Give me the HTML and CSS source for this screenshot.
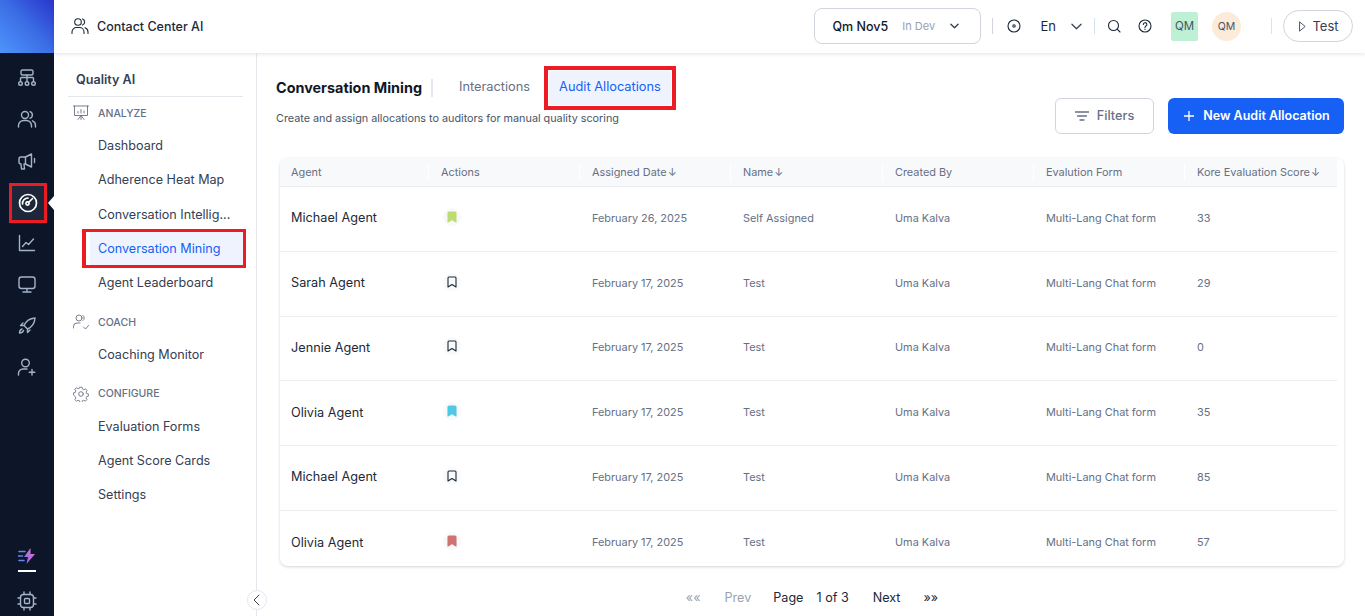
FILE: index.html
```html
<!DOCTYPE html>
<html lang="en">
<head>
    <meta charset="UTF-8">
    <title>Conversation Mining</title>
    <link rel="stylesheet" href="styles.css">
</head>
<body>
<div class="app">
    <nav class="rail">
        <div class="rail-logo">
            <svg width="22" height="22" viewBox="0 0 22 22" fill="#fff"><circle cx="3" cy="3" r="2.3"/><circle cx="11" cy="3" r="2.3"/><circle cx="19" cy="3" r="2.3"/><circle cx="3" cy="11" r="2.3"/><circle cx="11" cy="11" r="2.3"/><circle cx="19" cy="11" r="2.3"/><circle cx="3" cy="19" r="2.3"/><circle cx="11" cy="19" r="2.3"/><circle cx="19" cy="19" r="2.3"/></svg>
        </div>
        <ul class="rail-list">
            <li class="rail-item"><svg class="rail-icon" viewBox="0 0 20 20"><rect x="4" y="2" width="12" height="5" rx="1.5"/><path d="M10 7v6M3.500 13v-2.500a1 1 0 0 1 1-1h11a1 1 0 0 1 1 1V13"/><circle cx="3.500" cy="15.500" r="1.800"/><circle cx="10" cy="15.500" r="1.800"/><circle cx="16.500" cy="15.500" r="1.800"/></svg></li>
            <li class="rail-item"><svg class="rail-icon" viewBox="0 0 20 20"><circle cx="8" cy="6" r="3.500"/><path d="M1.500 18v-1.500a5 5 0 0 1 5-5h3a5 5 0 0 1 5 5V18M13 2.700a3.500 3.500 0 0 1 0 6.600M15.500 11.800a5 5 0 0 1 3 4.700V18"/></svg></li>
            <li class="rail-item"><svg class="rail-icon" viewBox="0 0 20 20"><path d="M2 8a2 2 0 0 1 2-2h4.500L14.500 3v13l-6-3H7l.5 5h-3L4 13a2 2 0 0 1-2-2zM8.500 6v7M17.500 7.500v4"/></svg></li>
            <li class="rail-item rail-item-active mark">
                <svg class="rail-icon rail-icon-white" viewBox="0 0 20 20"><circle cx="10" cy="10" r="8.500"/><path d="M10.500 9.500 14.500 5.500"/><circle cx="9.500" cy="10.500" r="1.600"/><path d="M4.500 11a5.500 5.500 0 0 1 5.500-6"/></svg>
            </li>
            <li class="rail-item"><svg class="rail-icon" viewBox="0 0 20 20"><path d="M2.500 2.500V17.500H17.500M5.500 13.500l3.500-4 2.500 2 5-5.500"/></svg></li>
            <li class="rail-item"><svg class="rail-icon" viewBox="0 0 20 20"><rect x="2" y="3" width="16" height="11.500" rx="2.500"/><path d="M10 14.500V18M6 18h8"/></svg></li>
            <li class="rail-item"><svg class="rail-icon" viewBox="0 0 20 20"><path d="M7 9.500C9 5 12.500 2.500 18 2c-.3 5.500-3 9-7.500 11zM7 9.500H3.500L6 7M10.500 13v3.500L13 14M7 9.500l3.500 3.500M5 13c-1.500.5-2.500 2-2.500 4 2 0 3.500-1 4-2.500"/></svg></li>
            <li class="rail-item"><svg class="rail-icon" viewBox="0 0 20 20"><circle cx="8.500" cy="6" r="3.800"/><path d="M1.500 18v-1.500a4.500 4.500 0 0 1 4.500-4.500h4M15 12.500v5.500M12.200 15.200h5.600"/></svg></li>
        </ul>
        <div class="rail-bottom">
            <div class="rail-bolt">
                <svg width="18" height="16" viewBox="0 0 18 16">
                    <defs><linearGradient id="bolt" x1="0" y1="1" x2="1" y2="0"><stop offset="0" stop-color="#7b6cf0"/><stop offset="1" stop-color="#ef74c6"/></linearGradient></defs>
                    <path d="M12.500 0 6 9h4L8.500 16 17 6h-4.500z" fill="url(#bolt)"/>
                    <path d="M1 3.500h6M0 8h4.500M1 12.500h5" stroke="#6488f0" stroke-width="1.500" fill="none"/>
                </svg>
            </div>
            <div class="rail-chip">
                <svg class="rail-icon" viewBox="0 0 20 20"><rect x="3.500" y="3.500" width="13" height="13" rx="3"/><rect x="7.500" y="7.500" width="5" height="5" rx="1"/><path d="M7 1v2.500M13 1v2.500M7 16.500V19M13 16.500V19M1 7h2.500M1 13h2.500M16.500 7H19M16.500 13H19"/></svg>
            </div>
        </div>
    </nav>

    <div class="main">
        <header class="topbar">
            <div class="product">
                <svg class="top-icon product-icon" viewBox="0 0 18 18"><circle cx="7" cy="5" r="3.300"/><path d="M1 16.500V15a4.500 4.500 0 0 1 4.500-4.500h3A4.500 4.500 0 0 1 13 15v1.500M11.500 1.900a3.300 3.300 0 0 1 0 6.200M14 10.700a4.500 4.500 0 0 1 3 4.300v1.500"/></svg>
                <span>Contact Center AI</span>
            </div>
            <div class="top-right">
                <div class="env">
                    <span class="env-name">Qm Nov5</span>
                    <span class="env-state">In Dev</span>
                    <svg class="chev env-chev" viewBox="0 0 10 6"><path d="M1 1l4 4 4-4"/></svg>
                </div>
                <i class="top-sep sep-a"></i>
                <svg class="top-icon icon-disc" viewBox="0 0 14 14"><circle cx="7" cy="7" r="6"/><circle cx="7" cy="7" r="1.200"/></svg>
                <span class="lang">En</span>
                <svg class="chev lang-chev" viewBox="0 0 12 7"><path d="M1 1l5 5 5-5"/></svg>
                <i class="top-sep sep-b"></i>
                <svg class="top-icon icon-search" viewBox="0 0 14 14"><circle cx="6.500" cy="6.500" r="5"/><path d="M10.200 10.200 13 13"/></svg>
                <svg class="top-icon icon-help" viewBox="0 0 14 14"><circle cx="7" cy="7" r="6"/><path d="M5.300 5.500a1.800 1.800 0 1 1 2.600 1.600c-.6.300-.9.600-.9 1.300M7 10v.5"/></svg>
                <span class="badge-square">QM</span>
                <span class="badge-round">QM</span>
                <i class="top-sep sep-c"></i>
                <div class="test-btn">
                    <svg class="play" viewBox="0 0 8 12"><path d="M1 1l6 5-6 5z"/></svg>
                    <span>Test</span>
                </div>
            </div>
        </header>

        <div class="body">
            <aside class="side">
                <div class="side-title">Quality AI</div>
                <div class="side-group side-group-first">
                    <svg class="group-icon" viewBox="0 0 16 16"><path d="M0.500 1h15M1.500 1v9.500h13V1M5 14.500l3-4 3 4M8 10.500v4M5 8V6.500M8 8V4.500M11 8V6"/></svg>
                    <span>ANALYZE</span>
                </div>
                <a class="side-link">Dashboard</a>
                <a class="side-link">Adherence Heat Map</a>
                <a class="side-link">Conversation Intellig...</a>
                <a class="side-link side-link-active">Conversation Mining</a>
                <a class="side-link">Agent Leaderboard</a>
                <div class="side-group side-group-coach">
                    <svg class="group-icon" viewBox="0 0 16 16"><circle cx="6" cy="4" r="3"/><path d="M0.500 14v-1.500a3.500 3.500 0 0 1 3.500-3.500h3M10 1.500a3 3 0 0 1 0 5M10.500 13l2 2 3-3.500"/></svg>
                    <span>COACH</span>
                </div>
                <a class="side-link">Coaching Monitor</a>
                <div class="side-group side-group-config">
                    <svg class="group-icon" viewBox="0 0 16 16"><circle cx="8" cy="8" r="2.300"/><path d="M6.800 1h2.400l.4 2 1.500.7 1.800-1 1.600 1.800-1.100 1.700.6 1.600 1.900.4v2.400l-1.900.5-.6 1.500 1 1.700-1.700 1.700-1.700-1-1.600.6-.4 1.900H6.800l-.4-1.900-1.600-.6-1.700 1-1.700-1.700 1-1.700-.6-1.500L-.1 9.400V7l1.900-.4.600-1.600L1.300 3.300 2.900 1.500l1.800 1 1.700-.7z" transform="translate(.6 .3) scale(.93)"/></svg>
                    <span>CONFIGURE</span>
                </div>
                <a class="side-link">Evaluation Forms</a>
                <a class="side-link">Agent Score Cards</a>
                <a class="side-link">Settings</a>
                <button class="collapse"><svg viewBox="0 0 7 12"><path d="M6 1 1 6l5 5"/></svg></button>
            </aside>

            <section class="content">
                <div class="page-head">
                    <div class="page-head-left">
                        <div class="tabs">
                            <h1 class="page-title">Conversation Mining</h1>
                            <span class="tab">Interactions</span>
                            <span class="tab tab-active mark">Audit Allocations</span>
                        </div>
                        <p class="page-sub">Create and assign allocations to auditors for manual quality scoring</p>
                    </div>
                    <div class="page-actions">
                        <button class="btn btn-filter">
                            <svg viewBox="0 0 14 10"><path d="M0 1h14M2.500 5h9M5 9h4"/></svg>Filters
                        </button>
                        <button class="btn btn-new">
                            <svg viewBox="0 0 10 10"><path d="M5 0v10M0 5h10"/></svg>New Audit Allocation
                        </button>
                    </div>
                </div>

                <div class="card">
                    <div class="row row-head">
                        <div class="cell">Agent</div>
                        <div class="cell">Actions</div>
                        <div class="cell">Assigned Date<span class="arrow">↓</span></div>
                        <div class="cell">Name<span class="arrow">↓</span></div>
                        <div class="cell">Created By</div>
                        <div class="cell">Evalution Form</div>
                        <div class="cell">Kore Evaluation Score<span class="arrow">↓</span></div>
                    </div>
                    <div class="row">
                        <div class="cell cell-agent">Michael Agent</div>
                        <div class="cell"><span class="flag flag-green"><svg viewBox="0 0 10 12"><path d="M1 2a1 1 0 0 1 1-1h6a1 1 0 0 1 1 1v9L5 8.500 1 11z"/></svg></span></div>
                        <div class="cell">February 26, 2025</div>
                        <div class="cell">Self Assigned</div>
                        <div class="cell">Uma Kalva</div>
                        <div class="cell">Multi-Lang Chat form</div>
                        <div class="cell">33</div>
                    </div>
                    <div class="row">
                        <div class="cell cell-agent">Sarah Agent</div>
                        <div class="cell"><span class="flag"><svg viewBox="0 0 10 12"><path d="M1 2a1 1 0 0 1 1-1h6a1 1 0 0 1 1 1v9L5 8.500 1 11z"/></svg></span></div>
                        <div class="cell">February 17, 2025</div>
                        <div class="cell">Test</div>
                        <div class="cell">Uma Kalva</div>
                        <div class="cell">Multi-Lang Chat form</div>
                        <div class="cell">29</div>
                    </div>
                    <div class="row">
                        <div class="cell cell-agent">Jennie Agent</div>
                        <div class="cell"><span class="flag"><svg viewBox="0 0 10 12"><path d="M1 2a1 1 0 0 1 1-1h6a1 1 0 0 1 1 1v9L5 8.500 1 11z"/></svg></span></div>
                        <div class="cell">February 17, 2025</div>
                        <div class="cell">Test</div>
                        <div class="cell">Uma Kalva</div>
                        <div class="cell">Multi-Lang Chat form</div>
                        <div class="cell">0</div>
                    </div>
                    <div class="row">
                        <div class="cell cell-agent">Olivia Agent</div>
                        <div class="cell"><span class="flag flag-blue"><svg viewBox="0 0 10 12"><path d="M1 2a1 1 0 0 1 1-1h6a1 1 0 0 1 1 1v9L5 8.500 1 11z"/></svg></span></div>
                        <div class="cell">February 17, 2025</div>
                        <div class="cell">Test</div>
                        <div class="cell">Uma Kalva</div>
                        <div class="cell">Multi-Lang Chat form</div>
                        <div class="cell">35</div>
                    </div>
                    <div class="row">
                        <div class="cell cell-agent">Michael Agent</div>
                        <div class="cell"><span class="flag"><svg viewBox="0 0 10 12"><path d="M1 2a1 1 0 0 1 1-1h6a1 1 0 0 1 1 1v9L5 8.500 1 11z"/></svg></span></div>
                        <div class="cell">February 17, 2025</div>
                        <div class="cell">Test</div>
                        <div class="cell">Uma Kalva</div>
                        <div class="cell">Multi-Lang Chat form</div>
                        <div class="cell">85</div>
                    </div>
                    <div class="row row-last">
                        <div class="cell cell-agent">Olivia Agent</div>
                        <div class="cell"><span class="flag flag-red"><svg viewBox="0 0 10 12"><path d="M1 2a1 1 0 0 1 1-1h6a1 1 0 0 1 1 1v9L5 8.500 1 11z"/></svg></span></div>
                        <div class="cell">February 17, 2025</div>
                        <div class="cell">Test</div>
                        <div class="cell">Uma Kalva</div>
                        <div class="cell">Multi-Lang Chat form</div>
                        <div class="cell">57</div>
                    </div>
                </div>

                <div class="pager">
                    <span class="pg pg-off pg-first">««</span>
                    <span class="pg pg-off pg-prev">Prev</span>
                    <span class="pg pg-page">Page</span>
                    <span class="pg pg-count">1 of 3</span>
                    <span class="pg pg-next">Next</span>
                    <span class="pg pg-last">»»</span>
                </div>
            </section>
        </div>
    </div>
</div>
</body>
</html>
```

FILE: styles.css
```css
* {
    box-sizing: border-box;
}
html, body {
    margin: 0;
    height: 100%;
    overflow: hidden;
}
body {
    font-family: "Inter", "Liberation Sans", sans-serif;
    color: #101828;
    background: #fff;
}
svg {
    display: block;
    fill: none;
    stroke-linecap: round;
    stroke-linejoin: round;
}

/* red annotation boxes from the screenshot */
.mark {
    outline: 3px solid #ed1c24;
}

.app {
    display: flex;
    height: 616px;
}

/* left rail */
.rail {
    width: 54px;
    flex: none;
    background: #0d1629;
    display: flex;
    flex-direction: column;
}
.rail-logo {
    height: 53px;
    padding-bottom: 1px;
    display: flex;
    align-items: center;
    justify-content: center;
    background: linear-gradient(45deg, #4f93fb 0%, #3b6fe6 50%, #2a35cc 100%);
}
.rail-list {
    list-style: none;
    margin: 4.350px 0 0;
    padding: 0;
}
.rail-item {
    height: 41.300px;
    display: flex;
    align-items: center;
    justify-content: center;
    position: relative;
}
.rail-icon {
    width: 20px;
    height: 20px;
    stroke: #a3b3c9;
    stroke-width: 1.400;
}
.rail-icon-white {
    stroke: #fff;
    stroke-width: 1.700;
}
.rail-item-active {
    width: 32px;
    height: 34px;
    margin: 4.750px 0 2.550px 12px;
    background: #1d2739;
}
.rail-item-active:after {
    content: "";
    position: absolute;
    right: -10px;
    top: 10px;
    border-style: solid;
    border-color: transparent #fff transparent transparent;
    border-width: 7px 6px 7px 0;
}
.rail-bottom {
    margin-top: auto;
}
.rail-bolt {
    width: 18px;
    margin: 0 auto;
    padding-bottom: 6px;
    border-bottom: 2px solid #fff;
}
.rail-chip {
    height: 30px;
    margin-top: 14px;
    display: flex;
    align-items: center;
    justify-content: center;
}

.main {
    flex: 1;
    min-width: 0;
    display: flex;
    flex-direction: column;
}

/* top bar */
.topbar {
    height: 53px;
    flex: none;
    display: flex;
    align-items: center;
    justify-content: space-between;
    background: #fff;
    box-shadow: 0 1px 4px rgba(16, 24, 40, 0.12);
    position: relative;
    z-index: 2;
    padding: 0 12px 1px 17px;
}
.product {
    display: flex;
    align-items: center;
    font-size: 12.500px;
    font-weight: 500;
    color: #1d2939;
}
.product-icon {
    width: 18px;
    height: 18px;
    margin-right: 8px;
    stroke-width: 1.300;
}
.top-icon {
    stroke: #1d2939;
    stroke-width: 1.100;
    flex: none;
}
.top-right {
    display: flex;
    align-items: center;
}
.env {
    width: 167px;
    height: 36px;
    border: 1px solid #d0d5dd;
    border-radius: 8px;
    display: flex;
    align-items: center;
    padding-left: 18px;
}
.env-name {
    font-size: 12.500px;
    font-weight: 500;
    color: #101828;
}
.env-state {
    font-size: 11px;
    color: #98a2b3;
    margin-left: 14px;
}
.chev {
    stroke: #344054;
    stroke-width: 1.300;
    flex: none;
}
.env-chev {
    width: 9px;
    height: 6px;
    margin-left: 15px;
    stroke-width: 1.500;
}
.top-sep {
    display: block;
    width: 1px;
    height: 16px;
    background: #d0d5dd;
    flex: none;
}
.sep-a {
    margin-left: 11px;
}
.icon-disc {
    width: 14px;
    height: 14px;
    margin-left: 14px;
}
.lang {
    font-size: 13px;
    margin-left: 20px;
    color: #1d2939;
}
.lang-chev {
    width: 11px;
    height: 7px;
    margin-left: 15px;
}
.sep-b {
    margin-left: 12px;
    background: #d5e0f5;
}
.icon-search {
    width: 14px;
    height: 14px;
    margin-left: 12px;
}
.icon-help {
    width: 14px;
    height: 14px;
    margin-left: 17px;
}
.badge-square {
    width: 27px;
    height: 29px;
    margin-left: 19px;
    background: #bdf0d4;
    border-radius: 2px;
    display: flex;
    align-items: center;
    justify-content: center;
    font-size: 11.500px;
    color: #475467;
}
.badge-round {
    width: 29px;
    height: 29px;
    margin-left: 14px;
    border-radius: 50%;
    background: #fdebd9;
    display: flex;
    align-items: center;
    justify-content: center;
    font-size: 10.500px;
    color: #475467;
}
.sep-c {
    margin-left: 30px;
    background: #f2dbe0;
}
.test-btn {
    width: 70px;
    height: 32px;
    margin-left: 11px;
    border: 1px solid #d0d5dd;
    border-radius: 16px;
    display: flex;
    align-items: center;
    justify-content: center;
    font-size: 13px;
    color: #344054;
}
.play {
    width: 7px;
    height: 11px;
    stroke: #344054;
    stroke-width: 1;
    margin: 0 6px 0 2px;
}

.body {
    flex: 1;
    min-height: 0;
    display: flex;
}

/* second level menu */
.side {
    width: 203px;
    flex: none;
    border-right: 1px solid #e4e7ec;
    padding: 19px 13px 0 14px;
    position: relative;
    display: flex;
    flex-direction: column;
}
.side-title {
    font-size: 12.600px;
    font-weight: 600;
    color: #344054;
    padding: 0 0 8px 8px;
    line-height: 16px;
    border-bottom: 1px solid #e4e7ec;
    margin-bottom: 1px;
}
.side-group {
    display: flex;
    flex: none;
    align-items: center;
    height: 16px;
    font-size: 10.500px;
    font-weight: 500;
    color: #667085;
    padding-left: 5px;
    margin-bottom: 7px;
}
.side-group-first {
    margin-top: 7px;
}
.side-group-coach {
    margin-top: 15px;
}
.side-group-config {
    margin-top: 14.500px;
}
.group-icon {
    width: 16px;
    height: 16px;
    stroke: #667085;
    stroke-width: 0.900;
    margin-right: 9px;
    flex: none;
}
.side-link {
    display: block;
    flex: none;
    height: 34.250px;
    line-height: 35px;
    font-size: 12.600px;
    color: #344054;
    padding-left: 30px;
}
.side-link-active {
    height: 39px;
    line-height: 33px;
    margin: -2px -3px -3px 14px;
    padding-left: 4px;
    text-indent: 8px;
    background: #eff3fe;
    background-clip: content-box;
    color: #1660f5;
    border: 3px solid #ed1c24;
    border-left-width: 4px;
    position: relative;
}
.collapse {
    position: absolute;
    right: -10.500px;
    bottom: 6px;
    width: 20px;
    height: 20px;
    padding: 0;
    border-radius: 50%;
    background: #fff;
    border: 1px solid #e4e7ec;
    display: flex;
    align-items: center;
    justify-content: center;
}
.collapse svg {
    width: 7px;
    height: 12px;
    stroke: #344054;
    stroke-width: 1;
}

/* content */
.content {
    flex: 1;
    min-width: 0;
    padding: 17px 21px 0 19px;
    display: flex;
    flex-direction: column;
}
.page-head {
    display: flex;
    flex: none;
    justify-content: space-between;
    height: 88px;
}
.page-head-left {
    min-width: 0;
}
.tabs {
    display: flex;
    align-items: center;
    height: 36px;
}
.page-title {
    margin: 0;
    font-size: 14.400px;
    font-weight: 700;
    color: #101828;
    padding-right: 9px;
    border-right: 2px solid #e4e7f2;
    line-height: 18px;
}
.tab {
    font-size: 12.800px;
    color: #667085;
    height: 34px;
    line-height: 32px;
}
.tab:first-of-type {
    margin-left: 26px;
}
.tab-active {
    background: #eff3fe;
    color: #1660f5;
    padding: 0 10px;
    margin: 0 0 0 19px;
    outline-width: 4px;
    outline-offset: 1px;
}
.page-sub {
    margin: 6px 0 0;
    font-size: 10.800px;
    color: #475467;
    line-height: 14px;
}
.page-actions {
    display: flex;
    gap: 14px;
    padding-top: 28px;
    height: 64px;
}
.btn {
    height: 36px;
    font-family: inherit;
    font-size: 12.700px;
    font-weight: 500;
    border-radius: 6px;
    padding: 0 0 1px;
    display: flex;
    align-items: center;
    justify-content: center;
}
.btn-filter {
    width: 99px;
    background: #fff;
    border: 1px solid #d0d5dd;
    color: #667085;
}
.btn-filter svg {
    width: 14px;
    height: 10px;
    stroke: #667085;
    stroke-width: 1.300;
    margin-right: 8px;
}
.btn-new {
    width: 176px;
    background: #1660f5;
    border: 0;
    color: #fff;
    font-size: 12.500px;
    font-weight: 600;
    padding-left: 2px;
}
.btn-new svg {
    width: 10px;
    height: 10px;
    stroke: #fff;
    stroke-width: 1.300;
    margin-right: 9px;
}

/* table */
.card {
    flex: none;
    margin: 0 0 0 4px;
    height: 408px;
    padding-right: 7px;
    border-radius: 8px;
    background: #fff;
    box-shadow: 0 1px 3px rgba(16, 24, 40, 0.18);
    overflow: hidden;
}
.row {
    display: grid;
    grid-template-columns: 149px 151px 151px 152px 151px 151px 1fr;
    height: 64.750px;
    padding-bottom: 2px;
    align-items: center;
    border-bottom: 1px solid #eaecf0;
    font-size: 10.900px;
    color: #667085;
}
.row-head {
    height: 29px;
    padding: 1px 0 0;
    background: #f8f9fb;
}
.row-last {
    border-bottom: 0;
}
.cell {
    padding-left: 12px;
    white-space: nowrap;
}
.cell:first-child {
    padding-left: 11px;
}
.row-head .cell {
    box-shadow: -1px 0 0 #fff;
    height: 17px;
    line-height: 17px;
}
.cell-agent {
    font-size: 12.700px;
    color: #1d2939;
}
.arrow {
    margin-left: 1px;
}
.flag {
    width: 18px;
    height: 18px;
    margin: 0 0 2px 2px;
    display: flex;
    align-items: center;
    justify-content: center;
    border-radius: 50%;
    background: #f8f9fb;
}
.flag svg {
    width: 10px;
    height: 12px;
    stroke: #1d2939;
    stroke-width: 1.100;
}
.flag-green svg {
    fill: #bedb6f;
    stroke: #bedb6f;
}
.flag-blue svg {
    fill: #4fc7e6;
    stroke: #4fc7e6;
}
.flag-red svg {
    fill: #cf7272;
    stroke: #cf7272;
}

/* pagination */
.pager {
    flex: none;
    display: flex;
    align-items: flex-start;
    justify-content: center;
    height: 50px;
    padding: 24px 0 0 4px;
    font-size: 12.600px;
    line-height: 16px;
    color: #1d2939;
}
.pg-off {
    color: #98a2b3;
}
.pg-prev {
    margin-left: 24px;
}
.pg-page {
    margin-left: 22px;
}
.pg-count {
    margin-left: 13px;
}
.pg-next {
    margin-left: 24px;
}
.pg-last {
    margin-left: 23px;
}
```
